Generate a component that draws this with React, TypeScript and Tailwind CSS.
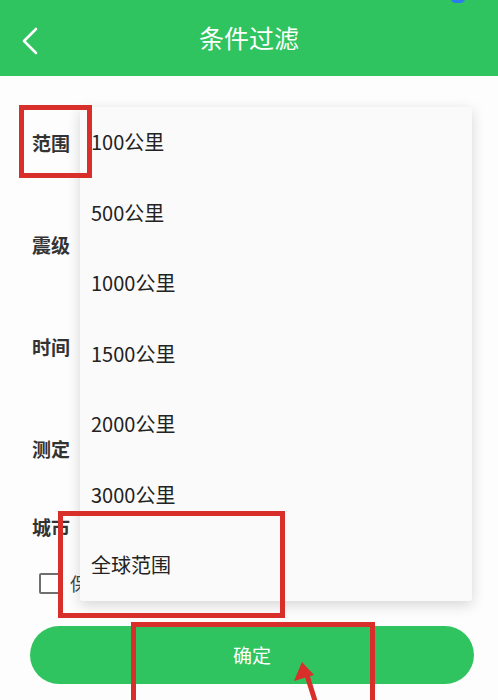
import React from 'react';

const ranges = ['100公里', '500公里', '1000公里', '1500公里', '2000公里', '3000公里', '全球范围'];

const labels = [
  { text: '范围', h: 'h-[102px]' },
  { text: '震级', h: 'h-[102px]' },
  { text: '时间', h: 'h-[102px]' },
  { text: '测定', h: 'h-[102px]' },
];

export default function App() {
  return (
    <div className="relative w-[498px] h-[700px] overflow-hidden bg-[#fdfdfd] font-['Noto_Sans_CJK_SC','Noto_Sans',sans-serif]">
      {/* Header */}
      <div className="relative h-[76px] bg-[#2fc45f] flex items-center justify-center">
        <svg className="absolute left-[20px] top-[26px]" width="22" height="30" viewBox="0 0 22 30" fill="none">
          <polyline points="16,3 4,15 16,27" stroke="white" strokeWidth="2.6" strokeLinecap="round" strokeLinejoin="round" />
        </svg>
        <h1 className="text-white text-[25px] leading-none tracking-[0px] -mt-[1px]">条件过滤</h1>
        {/* status dot at the edge */}
        <span className="absolute left-[451px] -top-[6px] w-[14px] h-[9px] rounded-full bg-[#2b7bea]" />
      </div>

      {/* Form body */}
      <div className="flex flex-col pt-[16px] pl-[32px]">
        {labels.map((l) => (
          <div key={l.text} className={`${l.h} flex items-center`}>
            <span className="text-[19px] font-bold text-[#333]">{l.text}</span>
          </div>
        ))}
        <div className="h-[54px] flex items-center">
          <span className="text-[19px] font-bold text-[#333]">城市</span>
        </div>
        <div className="h-[58px] flex items-center gap-[10px] pl-[7px]">
          <span className="w-[21px] h-[21px] rounded-[2px] border-2 border-[#6f6f6f] bg-white" />
          <span className="text-[18px] text-[#444]">保存设置</span>
        </div>
      </div>

      {/* Confirm button */}
      <div className="px-[30px] pt-[14px]">
        <button className="w-[444px] h-[58px] rounded-full bg-[#2fc45f] text-white text-[19px] flex items-center justify-center">
          确定
        </button>
      </div>

      {/* Dropdown menu */}
      <div className="absolute left-[80px] top-[107px] w-[392px] bg-[#fafafa] rounded-[3px] shadow-[0_4px_14px_rgba(0,0,0,0.16)] flex flex-col">
        {ranges.map((r) => (
          <div key={r} className="h-[70.5px] flex items-center pl-[11px] text-[20px] text-[#222]">
            {r}
          </div>
        ))}
      </div>

      {/* Annotation boxes */}
      <div className="absolute left-[19px] top-[105px] w-[73px] h-[73px] border-[5px] border-[#d92f2b]" />
      <div className="absolute left-[58px] top-[511px] w-[227px] h-[107px] border-[5px] border-[#d92f2b]" />
      <div className="absolute left-[131px] top-[622px] w-[244px] h-[100px] border-[5px] border-[#d92f2b]" />

      {/* Annotation arrow */}
      <svg className="absolute left-0 top-0" width="498" height="700" viewBox="0 0 498 700">
        <line x1="316" y1="704" x2="306" y2="672" stroke="#d92f2b" strokeWidth="5" />
        <polygon points="302,662 294,681 314,675" fill="#d92f2b" />
      </svg>
    </div>
  );
}
